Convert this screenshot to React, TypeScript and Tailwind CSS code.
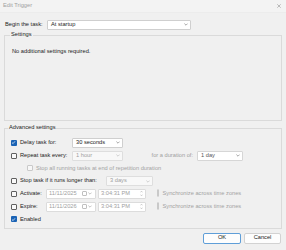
import React from "react";

const Chev = ({ c = "#6b6b6b" }: { c?: string }) => (
  <svg width="4" height="3" viewBox="0 0 4 3" className="shrink-0">
    <path d="M0.4 0.6 L2 2.2 L3.6 0.6" fill="none" stroke={c} strokeWidth="0.6" />
  </svg>
);

const Cb = ({ checked, disabled }: { checked?: boolean; disabled?: boolean }) =>
  checked ? (
    <span className="w-[6px] h-[6px] rounded-[1px] bg-[#1a63b5] flex items-center justify-center shrink-0">
      <svg width="5" height="5" viewBox="0 0 5 5">
        <path d="M1 2.6 L2.1 3.6 L4 1.3" fill="none" stroke="#fff" strokeWidth="0.7" />
      </svg>
    </span>
  ) : disabled ? (
    <span className="w-[6px] h-[6px] rounded-[1px] border-[0.6px] border-[#c9c9c9] bg-[#f7f7f7] shrink-0" />
  ) : (
    <span className="w-[6px] h-[6px] rounded-[1px] border-[0.6px] border-[#606060] bg-[#f9f9f9] shrink-0" />
  );

const Combo = ({ w, text, disabled, dim }: { w: string; text: string; disabled?: boolean; dim?: boolean }) => (
  <div
    className={
      disabled
        ? `${w} h-[10px] border-[0.6px] border-[#dedede] bg-[#f8f8f8] rounded-[1px] flex items-center justify-between pl-[3px] pr-[2px] text-[#9d9d9d]`
        : dim
        ? `${w} h-[10px] border-[0.6px] border-[#d6d6d6] bg-white rounded-[1px] flex items-center justify-between pl-[3px] pr-[2px] text-[#555]`
        : `${w} h-[10px] border-[0.6px] border-[#cfcfcf] bg-white rounded-[1px] flex items-center justify-between pl-[3px] pr-[2px]`
    }
  >
    <span>{text}</span>
    <Chev c={disabled ? "#b5b5b5" : "#6b6b6b"} />
  </div>
);

const DateTimeRow = ({ label, date }: { label: string; date: string }) => (
  <div className="h-[12.75px] flex items-center pl-[5.5px]">
    <Cb />
    <span className="w-[26px] ml-[3.5px]">{label}</span>
    <div className="w-[50px] h-[10px] border-[0.6px] border-[#dcdcdc] bg-white rounded-[1px] flex items-center justify-between pl-[2px] pr-[3px] text-[#a0a0a0]">
      <span>{date}</span>
      <div className="flex items-center gap-[1.5px]">
        <span className="w-[5px] h-[5px] rounded-[1px] border-[0.6px] border-[#c0c0c0]" />
        <Chev c="#9a9a9a" />
      </div>
    </div>
    <div className="w-[48px] h-[10px] ml-[2px] border-[0.6px] border-[#dcdcdc] bg-white rounded-[1px] flex items-center justify-between pl-[2px] pr-[2px] text-[#a0a0a0]">
      <span>3:04:31 PM</span>
      <svg width="3" height="7" viewBox="0 0 3 7">
        <path d="M0.3 2.4 L1.5 1.2 L2.7 2.4" fill="none" stroke="#9a9a9a" strokeWidth="0.5" />
        <path d="M0.3 4.6 L1.5 5.8 L2.7 4.6" fill="none" stroke="#9a9a9a" strokeWidth="0.5" />
      </svg>
    </div>
    <span className="ml-[11px]">
      <Cb disabled />
    </span>
    <span className="ml-[3.5px] text-[#a3a3a3]">Synchronize across time zones</span>
  </div>
);

export default function App() {
  return (
    <div className="w-[286px] h-[250px] bg-[#f0f0f0] flex flex-col overflow-hidden font-['Liberation_Sans',Arial,sans-serif] text-[5.7px] leading-none text-[#1b1b1b]">
      <div className="h-[13px] bg-[#f3f3f3] flex items-center justify-between pl-[3px] pr-[5px] text-[#a0a0a0] border-b-[0.5px] border-[#ececec]">
        <span>Edit Trigger</span>
        <svg width="4" height="4" viewBox="0 0 4 4">
          <path d="M0.3 0.3 L3.7 3.7 M3.7 0.3 L0.3 3.7" stroke="#8a8a8a" strokeWidth="0.55" />
        </svg>
      </div>

      <div className="flex items-center h-[10px] mt-[6.5px] pl-[5px]">
        <span className="w-[42px]">Begin the task:</span>
        <Combo w="w-[144px]" text="At startup" />
      </div>

      <div className="relative mx-[4px] mt-[5px] h-[86px] border-[0.6px] border-[#dadada] pl-[7px] pt-[13px]">
        <span className="absolute -top-[3.5px] left-[5px] bg-[#f0f0f0] px-[1px]">Settings</span>
        <span>No additional settings required.</span>
      </div>

      <div className="relative mx-[4px] mt-[7px] h-[101px] border-[0.6px] border-[#dadada] pt-[8px]">
        <span className="absolute -top-[3.5px] left-[3px] bg-[#f0f0f0] px-[1px]">Advanced settings</span>

        <div className="h-[12.75px] flex items-center pl-[5.5px]">
          <Cb checked />
          <span className="w-[52px] ml-[3.5px]">Delay task for:</span>
          <Combo w="w-[51px]" text="30 seconds" />
        </div>

        <div className="h-[12.75px] flex items-center pl-[5.5px]">
          <Cb />
          <span className="w-[52px] ml-[3.5px]">Repeat task every:</span>
          <Combo w="w-[51px]" text="1 hour" disabled />
          <span className="w-[74px] text-right pr-[4px] text-[#a0a0a0]">for a duration of:</span>
          <Combo w="w-[46px]" text="1 day" dim />
        </div>

        <div className="h-[12.75px] flex items-center pl-[22px]">
          <Cb disabled />
          <span className="ml-[3px] text-[#a3a3a3]">Stop all running tasks at end of repetition duration</span>
        </div>

        <div className="h-[12.75px] flex items-center pl-[5.5px]">
          <Cb />
          <span className="w-[86px] ml-[3.5px]">Stop task if it runs longer than:</span>
          <Combo w="w-[47px]" text="3 days" disabled />
        </div>

        <DateTimeRow label="Activate:" date="11/11/2025" />
        <DateTimeRow label="Expire:" date="11/11/2026" />

        <div className="h-[12.75px] flex items-center pl-[5.5px]">
          <Cb checked />
          <span className="ml-[3.5px]">Enabled</span>
        </div>
      </div>

      <div className="flex justify-end gap-[3px] mt-[4px] pr-[5px]">
        <button className="w-[38px] h-[11px] rounded-[2px] border-[0.7px] border-[#5f9ed8] bg-[#fdfdfd] flex items-center justify-center">
          OK
        </button>
        <button className="w-[37px] h-[11px] rounded-[2px] border-[0.6px] border-[#d2d2d2] bg-[#fdfdfd] flex items-center justify-center">
          Cancel
        </button>
      </div>
    </div>
  );
}
